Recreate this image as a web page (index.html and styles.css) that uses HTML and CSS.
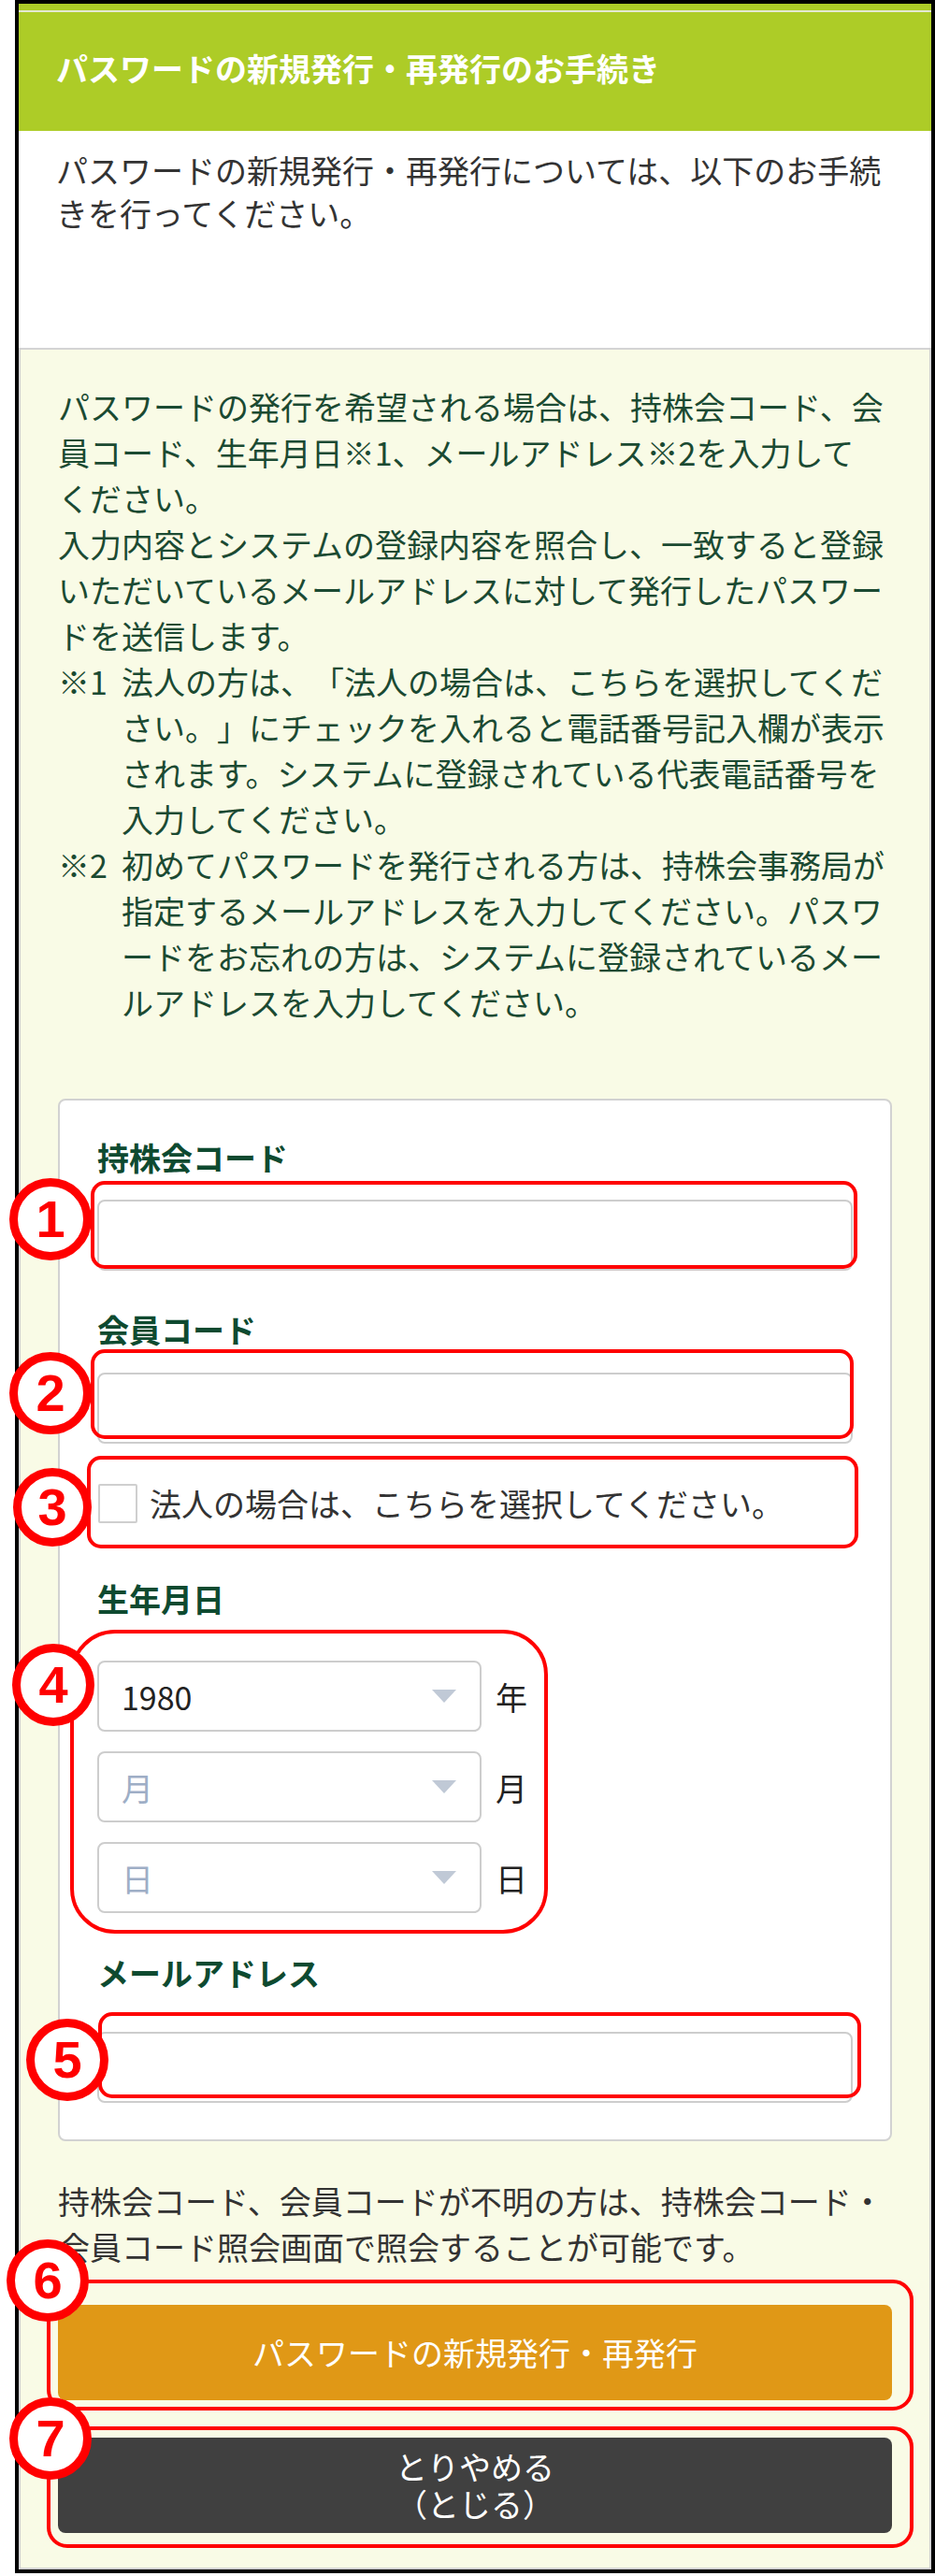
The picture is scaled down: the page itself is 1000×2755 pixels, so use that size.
FILE: index.html
```html
<!DOCTYPE html>
<html lang="ja">
<head>
  <meta charset="UTF-8" />
  <meta name="viewport" content="width=device-width, initial-scale=1.0"/>
  <title>パスワードの新規発行・再発行のお手続き</title>
  <link rel="stylesheet" href="styles.css">
</head>
<body>
  <div class="frame">
    <header class="page-head">
      <h1>パスワードの新規発行・再発行のお手続き</h1>
    </header>

    <div class="intro">
      <p>パスワードの新規発行・再発行については、以下のお手続<br>きを行ってください。</p>
    </div>

    <div class="panel">
      <p class="lead">パスワードの発行を希望される場合は、持株会コード、会<br>員コード、生年月日※1、メールアドレス※2を入力して<br>ください。<br>入力内容とシステムの登録内容を照合し、一致すると登録<br>いただいているメールアドレスに対して発行したパスワー<br>ドを送信します。</p>

      <div class="note">
        <span class="note-mark">※1</span>
        <span class="note-text">法人の方は、「法人の場合は、こちらを選択してくだ<br>さい。」にチェックを入れると電話番号記入欄が表示<br>されます。システムに登録されている代表電話番号を<br>入力してください。</span>
      </div>
      <div class="note">
        <span class="note-mark">※2</span>
        <span class="note-text">初めてパスワードを発行される方は、持株会事務局が<br>指定するメールアドレスを入力してください。パスワ<br>ードをお忘れの方は、システムに登録されているメー<br>ルアドレスを入力してください。</span>
      </div>

      <!-- Input form -->
      <form class="card" onsubmit="return false;">
        <label class="field-label first" for="groupCode">持株会コード</label>
        <input class="text-input" type="text" id="groupCode" />

        <label class="field-label" for="memberCode">会員コード</label>
        <input class="text-input" type="text" id="memberCode" />

        <label class="check-row">
          <input type="checkbox" class="check" />
          <span>法人の場合は、こちらを選択してください。</span>
        </label>

        <span class="field-label date-label">生年月日</span>
        <div class="date-group">
          <div class="date-row">
            <div class="select-wrap">
              <select class="select">
                <option>1980</option>
              </select>
            </div>
            <span class="unit">年</span>
          </div>
          <div class="date-row">
            <div class="select-wrap">
              <select class="select empty">
                <option>月</option>
              </select>
            </div>
            <span class="unit">月</span>
          </div>
          <div class="date-row">
            <div class="select-wrap">
              <select class="select empty">
                <option>日</option>
              </select>
            </div>
            <span class="unit">日</span>
          </div>
        </div>

        <label class="field-label mail-label" for="mail">メールアドレス</label>
        <input class="text-input" type="email" id="mail" />
      </form>

      <p class="sub-note">持株会コード、会員コードが不明の方は、持株会コード・<br>会員コード照会画面で照会することが可能です。</p>

      <button class="btn btn-issue" type="button">パスワードの新規発行・再発行</button>
      <button class="btn btn-close" type="button">とりやめる<br>（とじる）</button>
    </div>
  </div>

  <!-- Red annotation marks -->
  <div class="marks">
    <span class="box box-1"></span>
    <span class="box box-2"></span>
    <span class="box box-3"></span>
    <span class="box box-4"></span>
    <span class="box box-5"></span>
    <span class="box box-6"></span>
    <span class="box box-7"></span>
    <span class="num num-1">1</span>
    <span class="num num-2">2</span>
    <span class="num num-3">3</span>
    <span class="num num-4">4</span>
    <span class="num num-5">5</span>
    <span class="num num-6">6</span>
    <span class="num num-7">7</span>
  </div>
</body>
</html>
```

FILE: styles.css
```css
body {
  margin: 0;
  padding: 0;
  background: #fff;
  font-family: "Noto Sans CJK JP", "Noto Sans", sans-serif;
  font-size: 34px;
  color: #333;
  position: relative;
  text-spacing-trim: space-all;
}
p {
  margin: 0;
}
.frame {
  margin-left: 16px;
  width: 984px;
  border: 4px solid #000;
  box-sizing: border-box;
  background: #fff;
}

/* Title bar */
.page-head {
  background: #adcc27;
  padding-top: 7px;
}
.page-head h1 {
  margin: 0;
  border-top: 2px solid #e4e9d2;
  padding: 40px 40px 47px;
  font-size: 34px;
  line-height: 40px;
  font-weight: bold;
  color: #fff;
}

.intro {
  padding: 19px 40px 121px;
  line-height: 46px;
  white-space: nowrap;
}

/* Yellow panel */
.panel {
  background: #f9fbe6;
  border: 2px solid #d4d4d4;
  padding: 36px 40px 37px;
}
.lead,
.note-text,
.sub-note {
  line-height: 49px;
  white-space: nowrap;
}
.lead,
.note {
  color: #1b4a32;
}
.note {
  display: flex;
  line-height: 49px;
}
.note-mark {
  flex: 0 0 68px;
}

/* Form card */
.card {
  margin-top: 79px;
  background: #fff;
  border: 2px solid #d2d2d2;
  border-radius: 8px;
  padding: 41px 40px 39px;
}
.field-label {
  display: block;
  font-weight: bold;
  color: #0e4a30;
  line-height: 40px;
  margin: 43px 0 26px;
}
.field-label.first {
  margin: 0 0 25px;
}
.field-label.date-label {
  margin: 62px 0 46px;
}
.field-label.mail-label {
  margin: 44px 0 43px;
}
.text-input {
  display: block;
  width: 100%;
  height: 76px;
  box-sizing: border-box;
  border: 2px solid #cdcdcd;
  border-radius: 8px;
  background: #fff;
  font: inherit;
  padding: 0 24px;
  outline: none;
}

.check-row {
  display: flex;
  align-items: center;
  gap: 13px;
  margin-top: 44px;
  height: 40px;
  line-height: 40px;
  padding-left: 1px;
}
.check {
  appearance: none;
  -webkit-appearance: none;
  margin: 0;
  width: 42px;
  height: 42px;
  border: 2px solid #cfcfcf;
  border-radius: 2px;
  background: #fff;
}

.date-group {
  display: flex;
  flex-direction: column;
  gap: 21px;
}
.date-row {
  display: flex;
  align-items: center;
  gap: 15px;
}
.select-wrap {
  position: relative;
  width: 411px;
}
.select-wrap::after {
  content: "";
  position: absolute;
  right: 27px;
  top: 31px;
  border-left: 13px solid transparent;
  border-right: 13px solid transparent;
  border-top: 14px solid #c0c9d6;
}
.select {
  appearance: none;
  -webkit-appearance: none;
  display: block;
  width: 100%;
  height: 76px;
  border: 2px solid #cdcdcd;
  border-radius: 8px;
  background: #fff;
  font: inherit;
  color: #222;
  padding: 0 24px;
  outline: none;
}
.select.empty {
  color: #9eaec6;
}
.unit {
  color: #222;
}

.sub-note {
  margin-top: 39px;
  color: #333;
}

/* Buttons */
.btn {
  display: block;
  width: 100%;
  height: 102px;
  border: none;
  border-radius: 8px;
  color: #fff;
  font: inherit;
  line-height: 40px;
  cursor: pointer;
}
.btn-issue {
  margin-top: 38px;
  background: #e09816;
}
.btn-close {
  margin-top: 40px;
  background: #404040;
}

/* Annotations */
.marks {
  position: absolute;
  left: 0;
  top: 0;
  width: 100%;
  pointer-events: none;
}
.box {
  position: absolute;
  box-sizing: border-box;
  border: 4px solid #ff0000;
  border-radius: 15px;
}
.box-1 { left: 97px; top: 1263px; width: 820px; height: 94px; }
.box-2 { left: 97px; top: 1443px; width: 816px; height: 96px; }
.box-3 { left: 93px; top: 1557px; width: 825px; height: 99px; }
.box-4 { left: 75px; top: 1743px; width: 511px; height: 325px; border-radius: 48px; }
.box-5 { left: 105px; top: 2152px; width: 816px; height: 92px; }
.box-6 { left: 50px; top: 2438px; width: 927px; height: 140px; border-radius: 22px; }
.box-7 { left: 50px; top: 2595px; width: 927px; height: 130px; border-radius: 22px; }

.num {
  position: absolute;
  width: 88px;
  height: 88px;
  box-sizing: border-box;
  border: 9px solid #ff0000;
  border-radius: 50%;
  background: #fff;
  display: flex;
  align-items: center;
  justify-content: center;
  font-family: "Liberation Sans", Arial, sans-serif;
  font-weight: bold;
  font-size: 56px;
  line-height: 1;
  color: #ff0000;
}
.num-1 { left: 10px; top: 1260px; }
.num-2 { left: 10px; top: 1446px; }
.num-3 { left: 14px; top: 1570px; width: 84px; height: 84px; }
.num-4 { left: 13px; top: 1758px; }
.num-5 { left: 28px; top: 2159px; }
.num-6 { left: 7px; top: 2395px; }
.num-7 { left: 10px; top: 2564px; }
```
